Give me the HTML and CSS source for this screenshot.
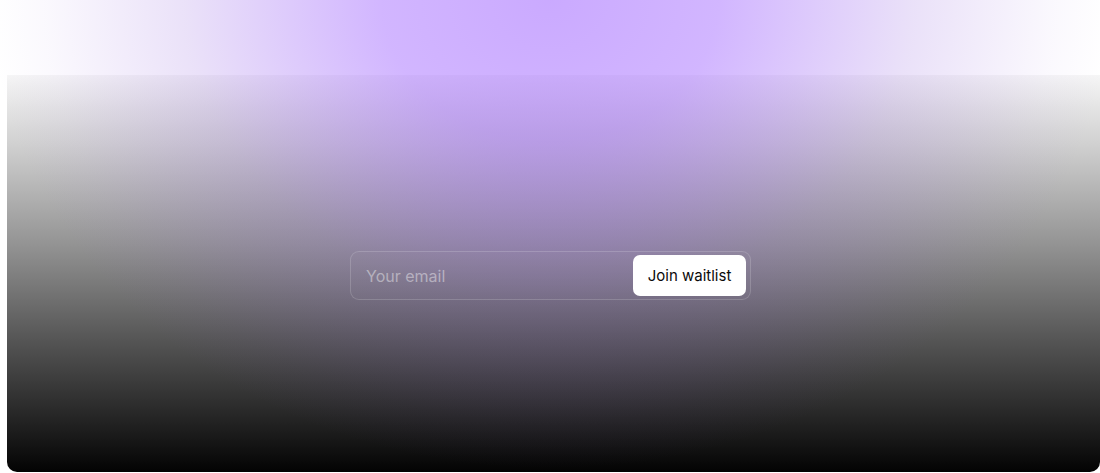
FILE: index.html
```html
<!DOCTYPE html>
<html lang="en">
<head>
<meta charset="utf-8">
<title>Waitlist</title>
<link rel="stylesheet" href="styles.css">
</head>
<body>
<div class="page">
  <section class="card">
    <form class="waitlist" onsubmit="return false">
      <input class="email" type="email" placeholder="Your email">
      <button class="join" type="submit">Join waitlist</button>
    </form>
  </section>
  <div class="glow"></div>
</div>
</body>
</html>
```
FILE: styles.css
```css
html, body {
  margin: 0;
  padding: 0;
  background: #ffffff;
  overflow: hidden;
}
.page {
  position: relative;
  height: 473px;
  padding: 75px 0 0 7px;
  box-sizing: border-box;
}
.card {
  height: 397px;
  border-radius: 0 0 10px 10px;
  background: linear-gradient(180deg, #f6f6f6 0%, #cfcfcf 18%, #959595 42%, #575757 66%, #262626 86%, #030303 100%);
  display: flex;
  align-items: center;
  justify-content: center;
  padding-right: 6px;
  padding-top: 4px;
  box-sizing: border-box;
}
.glow {
  position: absolute;
  left: 0;
  top: 0;
  width: 1100px;
  height: 473px;
  pointer-events: none;
  background:
    radial-gradient(ellipse 560px 470px at 550px 0px, rgba(150, 85, 255, 0.50) 0%, rgba(150, 85, 255, 0.43) 30%, rgba(140, 90, 220, 0.18) 65%, rgba(140, 90, 220, 0.04) 90%, rgba(140, 90, 220, 0) 100%);
}
.waitlist {
  position: relative;
  z-index: 1;
  width: 401px;
  height: 49px;
  box-sizing: border-box;
  border: 1px solid rgba(255, 255, 255, 0.16);
  border-radius: 9px;
  background: rgba(255, 255, 255, 0.02);
  display: flex;
  align-items: center;
  padding: 0 4px 0 15px;
  margin: 0;
}
.email {
  flex: 1;
  min-width: 0;
  border: 0;
  outline: 0;
  background: transparent;
  font-family: Inter, "Liberation Sans", sans-serif;
  font-size: 16px;
  color: #ffffff;
  padding: 0;
}
.email::placeholder {
  color: rgba(255, 255, 255, 0.42);
}
.join {
  height: 41px;
  width: 113px;
  border: 0;
  border-radius: 7px;
  background: #ffffff;
  color: #0a0a0a;
  font-family: Inter, "Liberation Sans", sans-serif;
  font-size: 15px;
  font-weight: 400;
  padding: 0;
  cursor: pointer;
}
```
